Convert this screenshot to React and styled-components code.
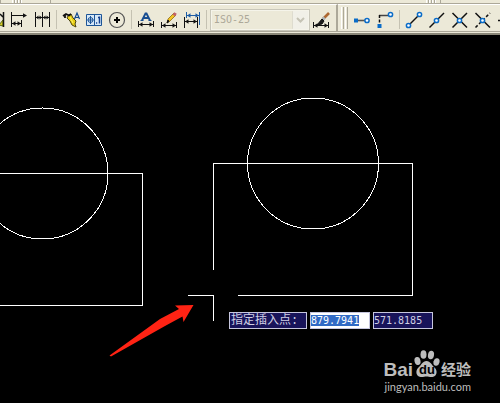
import { useEffect, useRef } from 'react';
import styled, { createGlobalStyle } from 'styled-components';

const GlobalStyle = createGlobalStyle`
  * {
    box-sizing: border-box;
  }

  body {
    margin: 0;
    background: #000;
    overflow: hidden;
  }
`

// every toolbar drawing shares the same 23 x 26 grid
function Icon({ children }) {
  return (
    <svg width="23" height="26" viewBox="0 0 23 26" fill="none" stroke="#111" aria-hidden="true">
      {children}
    </svg>
  )
}

// horizontal dimension line with an arrow head on each end
function Dim({ x1, x2, y, color = '#111' }) {
  return (
    <g stroke={color} fill={color}>
      <path d={`M${x1} ${y}H${x2}`} />
      <path stroke="none" d={`M${x1} ${y}l3.5 -2.2v4.4zM${x2} ${y}l-3.5 -2.2v4.4z`} />
    </g>
  )
}

function Node({ x, y }) {
  return <circle cx={x} cy={y} r="2.1" fill="#fff" stroke="#0a6cc8" strokeWidth="1.5" />
}

const dimensionTools = [
  {
    name: 'Quick dimension',
    icon: (
      <Icon>
        <path d="M14 20l4 -5v6z" fill="#d8cc28" stroke="#5a6a10" />
        <path d="M15 9l3 3M18.5 7v15" strokeWidth="1.5" />
      </Icon>
    ),
  },
  {
    name: 'Baseline',
    icon: (
      <Icon>
        <path d="M3.5 7v15M13.5 15v7M4 10.5h13" />
        <path d="M19 10.5l-4 -2.2v4.4z" fill="#111" stroke="none" />
        <Dim x1={4} x2={13} y={18.5} />
      </Icon>
    ),
  },
  {
    name: 'Continue',
    icon: (
      <Icon>
        <path d="M4.5 7v15M11.5 7v15M18.5 7v15M4 12.5h15" />
        <path d="M5 12.5l2.5 -2v4zM11 12.5l-2.5 -2v4zM12 12.5l2.5 -2v4zM18 12.5l-2.5 -2v4z" fill="#111" stroke="none" />
      </Icon>
    ),
    last: true,
  },
  {
    name: 'Quick leader',
    icon: (
      <Icon>
        <path d="M8 11l3 -2 2 4 3 3 -1 3 1 3 -4 -2 -2 -4 -3 -3z" fill="#e9cf13" stroke="#4a4410" />
        <path d="M3 11l3 -2 3 1.5 2 -1.5M5 9v4" strokeWidth="1.8" />
        <path d="M10 12l3 6" stroke="#fff46a" />
        <path d="M14.5 14l2.5 -6 2.5 6M15.5 12.5h3" stroke="#124a92" strokeWidth="1.2" />
      </Icon>
    ),
  },
  {
    name: 'Tolerance',
    icon: (
      <Icon>
        <path d="M3.5 9.5h15v11h-15z" fill="#d6e8f8" stroke="#1d5597" />
        <path d="M11.5 9.5v11" stroke="#1d5597" />
        <circle cx="7.5" cy="15" r="2.5" stroke="#1d5597" />
        <path d="M7.5 11v8M4.5 15h6" stroke="#1d5597" />
        <path d="M13 18h1.2M16.5 11.5v7M15 12.5h1.5" stroke="#123f90" strokeWidth="1.5" />
      </Icon>
    ),
  },
  {
    name: 'Center mark',
    icon: (
      <Icon>
        <circle cx="11" cy="15" r="7.5" stroke="#555" strokeWidth="1.2" />
        <path d="M8 15h6M11 12v6" stroke="#000" strokeWidth="2" />
      </Icon>
    ),
    last: true,
  },
  {
    name: 'Dimension edit',
    icon: (
      <Icon>
        <path d="M7 15.5l3.5 -7h1l3.5 7M8.5 13h5" stroke="#1a4f92" strokeWidth="1.9" />
        <path d="M5.5 15.5h3M13.5 15.5h3" stroke="#1a4f92" />
        <path d="M3.5 16v6M18.5 16v6" />
        <Dim x1={4} x2={18} y={19.5} />
      </Icon>
    ),
  },
  {
    name: 'Dimension text edit',
    icon: (
      <Icon>
        <path d="M9 18l1 -4 6 -6 2 2 -6 6z" fill="#f2c422" stroke="#8d6a15" strokeWidth=".8" />
        <path d="M15.5 8.5l2.5 1.5" stroke="#c0616a" strokeWidth="3" />
        <path d="M9 18l1 -3 1 1.5z" fill="#111" />
        <path d="M3.5 17v6M18.5 17v6" />
        <Dim x1={4} x2={18} y={20.5} />
      </Icon>
    ),
  },
  {
    name: 'Dimension update',
    icon: (
      <Icon>
        <path d="M5.5 7v6M18.5 7v13" stroke="#1e5da6" />
        <Dim x1={6} x2={18} y={10.5} color="#1e5da6" />
        <path d="M3.5 12v11M16.5 12v11" />
        <Dim x1={4} x2={16} y={16.5} />
      </Icon>
    ),
    last: true,
  },
]

const styleTool = {
  name: 'Dimension style',
  icon: (
    <Icon>
      <path d="M19 8l-6 6" stroke="#ad6832" strokeWidth="2.6" />
      <path d="M14.5 12.5l-2 2.5" stroke="#a9b3b8" strokeWidth="3" />
      <path d="M12 14l2 2 -2 3 -5 1z" fill="#1c1c1c" />
      <path d="M3.5 17v6M18.5 17v6" />
      <Dim x1={4} x2={18} y={20.5} />
    </Icon>
  ),
}

const snapTools = [
  {
    name: 'Temporary track point',
    icon: (
      <Icon>
        <path d="M5 15.5h9" stroke="#555" strokeWidth="1.6" />
        <path d="M3 13.5h4v4h-4z" fill="#0a6cc8" stroke="none" />
        <Node x={16} y={15.5} />
      </Icon>
    ),
  },
  {
    name: 'Snap from',
    icon: (
      <Icon>
        <path d="M5 10.5h9" strokeWidth="1.5" stroke="#444" />
        <path d="M5.5 10v9" strokeWidth="1.5" strokeDasharray="3 1.5" />
        <path d="M3.5 19h4v4h-4z" fill="#0a6cc8" stroke="none" />
        <Node x={16.5} y={9.5} />
      </Icon>
    ),
    last: true,
  },
  {
    name: 'Endpoint',
    icon: (
      <Icon>
        <path d="M6 20L17 9" strokeWidth="1.5" />
        <Node x={5.5} y={20.5} />
        <Node x={16.5} y={9.5} />
      </Icon>
    ),
  },
  {
    name: 'Midpoint',
    icon: (
      <Icon>
        <path d="M3.5 22.5L18 8" strokeWidth="1.5" />
        <Node x={10.5} y={15.5} />
      </Icon>
    ),
  },
  {
    name: 'Intersection',
    icon: (
      <Icon>
        <path d="M3.5 22.5L18 8M3.5 8L18 22.5" strokeWidth="1.5" />
        <Node x={10.5} y={15.5} />
      </Icon>
    ),
  },
  {
    name: 'Apparent intersection',
    icon: (
      <Icon>
        <path d="M3.5 8L18 22.5" strokeWidth="1.5" />
        <path d="M3.5 22.5L18 8" strokeWidth="1.5" strokeDasharray="3 2" />
        <Node x={10.5} y={15.5} />
      </Icon>
    ),
  },
  {
    name: 'Extension',
    icon: (
      <Icon>
        <path d="M3 15.5h9" strokeWidth="1.5" />
      </Icon>
    ),
  },
]

function Tools({ items }) {
  return items.map((tool) => (
    <ToolGroup key={tool.name} $last={tool.last}>
      <ToolButton type="button" aria-label={tool.name}>{tool.icon}</ToolButton>
    </ToolGroup>
  ))
}

function Drawing() {
  return (
    <Lines aria-hidden="true">
      <g fill="none" stroke="#fff" shapeRendering="crispEdges">
        {/* left block */}
        <circle cx="42.5" cy="138.5" r="65.5" />
        <path d="M0 138.5H142.5V270.5H0" />
        {/* right block, broken around the crosshair */}
        <circle cx="313" cy="128.5" r="65.5" />
        <path d="M213.5 235V128.5H412.5V260.5H238" />
        <path d="M188 260.5H213.5V286" />
      </g>
      <path d="M109.5 320.5L160 284 179 274 175 270.5 193.5 270 183.5 287 182.5 281.5 165 291 111 321.5z" fill="#ff2314" />
    </Lines>
  )
}

function Watermark() {
  return (
    <Mark>
      <Brand>
        <Latin>Bai</Latin>
        <Paw>
          <svg width="28" height="30" viewBox="0 0 28 30" fill="#bdbdbd" aria-hidden="true">
            <ellipse cx="4.5" cy="12" rx="3" ry="4" transform="rotate(-12 4.5 12)" />
            <ellipse cx="10.5" cy="5.5" rx="3" ry="4.3" />
            <ellipse cx="18" cy="6" rx="3" ry="4.3" transform="rotate(10 18 6)" />
            <ellipse cx="23.5" cy="13" rx="3" ry="3.8" transform="rotate(15 23.5 13)" />
            <path d="M13.5 12c4 0 5 4 8 6.5 3.5 3 2.5 9 -2 9.5 -2.5 .3 -4 -.5 -6 -.5s-3.5 .8 -6 .5c-4.5 -.5 -5.5 -6.5 -2 -9.5 3 -2.5 4 -6.5 8 -6.5z" />
          </svg>
          <PawText>du</PawText>
        </Paw>
        <Chinese>经验</Chinese>
      </Brand>
      <Site href="#">jingyan.baidu.com</Site>
    </Mark>
  )
}

function App() {
  const xInput = useRef(null);

  // the x value starts out selected, ready to be typed over
  useEffect(() => {
    xInput.current.focus();
    xInput.current.select();
  }, []);

  return (
    <Window>
      <GlobalStyle />
      <UpperBar>
        <UpperEdge $width="12px" />
        <Grip $gap="3px" />
        <UpperEdge $width="376px" $left="28px" />
        <Grip $gap="3px" />
        <UpperEdge $left="4px" />
      </UpperBar>
      <ToolRow>
        <Toolbar $clipped>
          <Tools items={dimensionTools} />
          <StyleSelect aria-label="Dimension style name" disabled defaultValue="ISO-25">
            <option>ISO-25</option>
          </StyleSelect>
          <ToolButton type="button" aria-label={styleTool.name}>{styleTool.icon}</ToolButton>
        </Toolbar>
        <Toolbar $grow>
          <Grip $gap="4px" />
          <Tools items={snapTools} />
        </Toolbar>
      </ToolRow>
      <Canvas>
        <Drawing />
        <Prompt>
          <PromptLabel htmlFor="insert-x">指定插入点:</PromptLabel>
          <Coordinate id="insert-x" ref={xInput} defaultValue="879.7941" $active />
          <Coordinate aria-label="Y" defaultValue="571.8185" />
        </Prompt>
        <Watermark />
      </Canvas>
    </Window>
  )
}

const Window = styled.div`
  display: flex;
  flex-direction: column;
  height: 100vh;
  overflow: hidden;
  background: #000;
`

const UpperBar = styled.div`
  display: flex;
  flex: none;
  height: 4px;
  background: #ece9d8;
  border-bottom: 1px solid #aca899;
`

const UpperEdge = styled.div`
  flex: ${(props) => (props.$width ? `0 1 ${props.$width}` : '1')};
  margin-left: ${(props) => props.$left || 0};
  height: 3px;
  border-left: 1px solid #aca899;
`

const Grip = styled.div`
  flex: none;
  width: ${(props) => (props.$gap === '4px' ? '7px' : '10px')};
  margin: ${(props) => (props.$gap === '4px' ? '2px 3px 2px 2px' : '0')};
  background: repeating-linear-gradient(
    to right,
    #fff 0 1px,
    #ece9d8 1px 2px,
    #aca899 2px 3px,
    #ece9d8 3px ${(props) => props.$gap}
  );
`

const ToolRow = styled.div`
  display: flex;
  flex: none;
  height: 31px;
  background: #ece9d8;
  border-bottom: 2px solid #8a8778;
`

const Toolbar = styled.div`
  display: flex;
  flex: ${(props) => (props.$grow ? '1' : 'none')};
  min-width: 0;
  height: 28px;
  padding-left: ${(props) => (props.$clipped ? 0 : '1px')};
  padding-right: ${(props) => (props.$clipped ? '3px' : 0)};
  margin-left: ${(props) => (props.$clipped ? '-15px' : 0)};
  overflow: hidden;
  border-top: 1px solid #fff;
  border-bottom: 1px solid #aca899;
  border-right: ${(props) => (props.$clipped ? '2px solid #aca899' : 'none')};
`

const ToolGroup = styled.div`
  display: flex;
  flex: none;

  &::after {
    content: '';
    display: ${(props) => (props.$last ? 'block' : 'none')};
    width: 1px;
    height: 19px;
    margin: 5px 3px 0 2px;
    background: #c5c2b2;
  }
`

const ToolButton = styled.button`
  display: block;
  flex: none;
  width: 23px;
  height: 26px;
  padding: 0;
  border: none;
  background: none;

  svg {
    display: block;
  }
`

const StyleSelect = styled.select`
  appearance: none;
  flex: none;
  width: 100px;
  height: 22px;
  margin-top: 4px;
  padding: 0 20px 0 3px;
  border: 1px solid #c9c7ba;
  border-radius: 0;
  outline: 1px solid #f5f4ea;
  outline-offset: -2px;
  color: #aca899;
  opacity: 1;
  font: 10px/18px 'DejaVu Sans Mono', monospace;
  background:
    url("data:image/svg+xml,%3Csvg xmlns='http://www.w3.org/2000/svg' width='17' height='20'%3E%3Crect x='.5' y='.5' width='16' height='19' rx='1' fill='%23f1f0e8' stroke='%23dedccf'/%3E%3Cpath d='M5 8l3.5 3.5L12 8' fill='none' stroke='%23c5c3b5' stroke-width='2'/%3E%3C/svg%3E")
    right center no-repeat #ece9d8;
`

const Canvas = styled.main`
  position: relative;
  flex: 1;
  min-height: 0;
  overflow: hidden;
`

const Lines = styled.svg`
  display: block;
  width: 100%;
  height: 100%;
`

const Prompt = styled.div`
  position: absolute;
  left: 229px;
  top: 277px;
  display: flex;
  gap: 3px;
`

const PromptLabel = styled.label`
  width: 78px;
  height: 17px;
  padding-left: 1px;
  border: 1px solid #c6c6de;
  background: #18145a;
  color: #d0d0e4;
  font: 12px/16px 'Liberation Mono', 'Noto Sans CJK SC', monospace;
  white-space: nowrap;
`

const Coordinate = styled.input`
  width: 60px;
  height: 17px;
  padding: 0;
  border: 1px solid #c6c6de;
  border-radius: 0;
  outline: none;
  background: ${(props) => (props.$active ? '#fff' : '#18145a')};
  color: ${(props) => (props.$active ? '#18145a' : '#d0d0e4')};
  font: 10px/13px 'DejaVu Sans Mono', monospace;

  &::selection {
    background: #316ac5;
    color: #fff;
  }
`

const Mark = styled.div`
  position: absolute;
  right: 29px;
  bottom: 8px;
  display: flex;
  flex-direction: column;
  align-items: flex-end;
  color: #bdbdbd;
`

const Brand = styled.div`
  display: flex;
  align-items: flex-end;
  height: 30px;
`

const Latin = styled.span`
  font: bold 19px/18px 'Liberation Sans', sans-serif;
`

const Paw = styled.span`
  position: relative;
  width: 28px;
  height: 30px;
`

const PawText = styled.span`
  position: absolute;
  left: 6px;
  bottom: 2px;
  color: #000;
  font: bold 13px/14px 'Liberation Sans', sans-serif;
`

const Chinese = styled.span`
  font: bold 15px/20px 'Noto Sans CJK SC', sans-serif;
`

const Site = styled.a`
  color: inherit;
  font: 11px/16px Lato, sans-serif;
  text-decoration: none;
`

export default App;
